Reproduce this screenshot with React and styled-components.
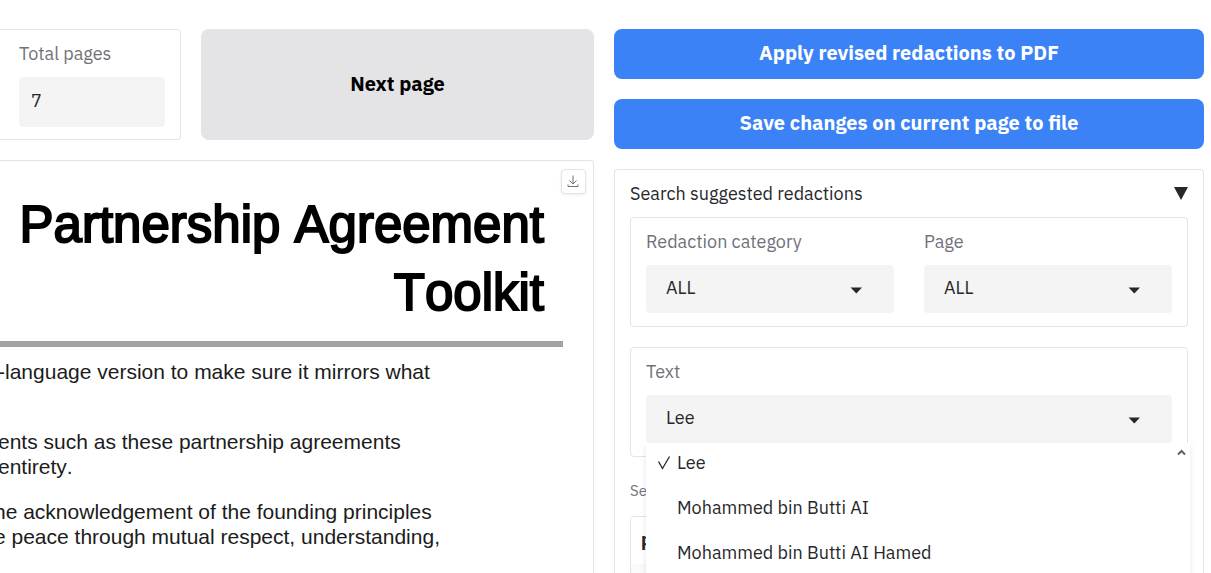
import React, { useState } from "react";
import styled, { createGlobalStyle } from "styled-components";

const GlobalStyle = createGlobalStyle`
  *, *::before, *::after { box-sizing: border-box; }
  body {
    margin: 0;
    background: #fff;
    color: #27272a;
    font-family: "IBM Plex Sans", Roboto, "Liberation Sans", sans-serif;
    font-size: 18px;
    font-weight: 400;
    line-height: 26px;
  }
  button, input, select { font: inherit; color: inherit; }
`;

const Page = styled.main`
  display: grid;
  grid-template-columns: minmax(0, 594fr) minmax(0, 590fr);
  gap: 20px;
  height: 100vh;
  padding: 29px 7px 0 0;
  overflow: hidden;
`;

const Column = styled.div`
  display: flex;
  flex-direction: column;
  gap: 20px;
  min-width: 0;
`;

const PagerRow = styled.div`
  display: flex;
  gap: 20px;
`;

const TotalPages = styled.div`
  flex: 0 0 181px;
  border: 1px solid #e4e4e7;
  border-left: 0;
  border-radius: 0 4px 4px 0;
  padding: 11px 15px 12px 19px;
`;

const Label = styled.label`
  display: block;
  margin-bottom: 10px;
  color: #71717a;
`;

const NumberInput = styled.input`
  display: block;
  width: 100%;
  height: 50px;
  padding: 0 12px 4px;
  border: 0;
  border-radius: 4px;
  background: #f4f4f4;
`;

const Button = styled.button`
  flex: ${(p) => (p.$primary ? "none" : "1")};
  min-height: 50px;
  padding: 0 16px 2px;
  border: 0;
  border-radius: 8px;
  background: ${(p) => (p.$primary ? "#3b82f6" : "#e4e4e7")};
  color: ${(p) => (p.$primary ? "#fff" : "#000")};
  font-size: 20px;
  font-weight: 700;
  cursor: pointer;
`;

const Preview = styled.section`
  position: relative;
  flex: 1;
  border: 1px solid #e4e4e7;
  border-width: 1px 1px 0 0;
  border-radius: 0 4px 0 0;
  padding-top: 30px;
  overflow: hidden;
  font-kerning: none;
`;

const DownloadButton = styled.button`
  position: absolute;
  top: 8px;
  right: 7px;
  display: grid;
  place-items: center;
  width: 25px;
  height: 25px;
  padding: 0;
  border: 1px solid #e4e4e7;
  border-radius: 4px;
  background: #fff;
  box-shadow: 0 1px 3px rgba(0, 0, 0, 0.08);
  color: #71717a;
`;

const DocTitle = styled.h1`
  margin: 0 49px 0 0;
  color: #000;
  font-family: "Liberation Sans", sans-serif;
  font-size: 51px;
  font-weight: 400;
  line-height: 68px;
  text-align: right;
  -webkit-text-stroke: 2px #000;
`;

const DocRule = styled.hr`
  height: 6px;
  margin: 14px 30px 12px 0;
  border: 0;
  background: #a3a3a3;
`;

const DocText = styled.p`
  margin: 0 0 ${(p) => (p.$loose ? "45px" : "20px")} -${(p) => p.$bleed}px;
  color: #1c1c1c;
  font-family: "Liberation Sans", sans-serif;
  font-size: 21px;
  font-weight: 400;
  line-height: 25px;
  white-space: nowrap;
`;

const Accordion = styled.section`
  flex: 1;
  border: 1px solid #e4e4e7;
  border-bottom: 0;
  border-radius: 4px 4px 0 0;
  padding: 11px 15px 0;
`;

const AccordionHeader = styled.button`
  display: flex;
  justify-content: space-between;
  align-items: center;
  width: 100%;
  margin-bottom: 10px;
  padding: 0;
  border: 0;
  background: none;
`;

const Group = styled.div`
  display: flex;
  gap: 30px;
  margin-bottom: 20px;
  padding: 11px 15px 13px;
  border: 1px solid #e4e4e7;
  border-radius: 4px;
`;

const Field = styled.div`
  position: relative;
  flex: 1;
  min-width: 0;
`;

const SelectWrap = styled.div`
  display: grid;
  grid-template-columns: 1fr 48px;
  align-items: center;
`;

const Select = styled.select`
  grid-area: 1 / 1 / 2 / 3;
  width: 100%;
  height: 48px;
  padding: 0 48px 2px 20px;
  border: 0;
  border-radius: 4px;
  background: #f4f4f4;
  appearance: none;
`;

const Caret = styled.svg`
  grid-area: 1 / 2 / 2 / 3;
  pointer-events: none;
`;

const Menu = styled.ul`
  position: absolute;
  z-index: 2;
  top: 100%;
  left: 0;
  right: -18px;
  height: 260px;
  margin: 0;
  padding: 0;
  background: #fff;
  box-shadow: 0 2px 6px rgba(0, 0, 0, 0.1);
  clip-path: inset(0 -12px -12px -12px);
  list-style: none;
`;

const MenuItem = styled.li`
  display: flex;
  align-items: center;
  height: 45px;
  padding: 0 10px 6px;
  cursor: pointer;
`;

const Tick = styled.span`
  display: flex;
  width: 21px;
  padding-left: 1px;
  visibility: ${(p) => (p.$on ? "visible" : "hidden")};
`;

const ScrollUp = styled.svg`
  position: absolute;
  top: 5px;
  right: 4px;
`;

const Caption = styled.p`
  margin: 21px 0 12px;
  color: #71717a;
  font-size: 15px;
  line-height: 26px;
`;

const TableFrame = styled.div`
  height: 120px;
  border: 1px solid #e4e4e7;
  border-radius: 4px 4px 0 0;
  background: #fafafa;
  overflow: hidden;
`;

const Table = styled.table`
  width: 100%;
  border-collapse: collapse;
  background: #fff;
  text-align: left;

  th { height: 47px; padding: 0 10px 2px; color: #27272a; font-weight: 700; }
`;

function DropDown({ id, label, options, children, ...rest }) {
  return (
    <Field>
      <Label htmlFor={id}>{label}</Label>
      <SelectWrap>
        <Select id={id} {...rest}>
          {options.map((o) => (
            <option key={o}>{o}</option>
          ))}
        </Select>
        <Caret width="20" height="20" viewBox="0 0 20 20" fill="#27272a" aria-hidden="true">
          <path d="M4.6 8.4h11.4l-5.7 6z" />
        </Caret>
      </SelectWrap>
      {children}
    </Field>
  );
}

const NAMES = ["Lee", "Mohammed bin Butti AI", "Mohammed bin Butti AI Hamed"];

export default function App() {
  const [name, setName] = useState(NAMES[0]);

  return (
    <>
      <GlobalStyle />
      <Page>
        <Column>
          <PagerRow>
            <TotalPages>
              <Label htmlFor="total">Total pages</Label>
              <NumberInput id="total" defaultValue="7" />
            </TotalPages>
            <Button type="button">Next page</Button>
          </PagerRow>
          <Preview>
            <DownloadButton type="button" aria-label="Download">
              <svg width="13" height="13" viewBox="0 0 13 13" fill="none" stroke="currentColor" aria-hidden="true">
                <path d="M6 0.500v8M2.500 5.500l3.500 3.500L9.500 5.500M1 9.500v2h10v-2" />
              </svg>
            </DownloadButton>
            <DocTitle>
              Partnership Agreement
              <br />
              Toolkit
            </DocTitle>
            <DocRule />
            <DocText $bleed={2} $loose>-language version to make sure it mirrors what</DocText>
            <DocText $bleed={2}>
              ents such as these partnership agreements
              <br />
              entirety.
            </DocText>
            <DocText $bleed={6}>
              he acknowledgement of the founding principles
              <br />e peace through mutual respect, understanding,
            </DocText>
          </Preview>
        </Column>

        <Column>
          <Button type="button" $primary>Apply revised redactions to PDF</Button>
          <Button type="button" $primary>Save changes on current page to file</Button>
          <Accordion>
            <AccordionHeader type="button" aria-expanded="true">
              <span>Search suggested redactions</span>
              <svg width="14" height="14" viewBox="0 0 14 14" fill="#27272a" aria-hidden="true">
                <path d="M0 0h14L7 13z" />
              </svg>
            </AccordionHeader>
            <Group>
              <DropDown id="category" label="Redaction category" options={["ALL"]} />
              <DropDown id="page" label="Page" options={["ALL"]} />
            </Group>
            <Group>
              <DropDown
                id="text"
                label="Text"
                options={NAMES}
                value={name}
                onChange={(e) => setName(e.target.value)}
              >
                <Menu role="listbox" aria-label="Text">
                  {NAMES.map((n) => (
                    <MenuItem key={n} role="option" aria-selected={n === name} onClick={() => setName(n)}>
                      <Tick $on={n === name}>
                        <svg width="14" height="15" viewBox="0 0 14 15" fill="none" stroke="#27272a" strokeWidth="1.3" aria-hidden="true">
                          <path d="M1.500 6.500l4 7L12.500 1.500" />
                        </svg>
                      </Tick>
                      {n}
                    </MenuItem>
                  ))}
                  <ScrollUp width="9" height="8" viewBox="0 0 9 8" fill="none" stroke="#606060" strokeWidth="2" aria-hidden="true">
                    <path d="M1 6.500l3.500-3.500L8 6.500" />
                  </ScrollUp>
                </Menu>
              </DropDown>
            </Group>
            <Caption>Search</Caption>
            <TableFrame>
              <Table>
                <thead>
                  <tr>
                    <th scope="col">page</th>
                  </tr>
                </thead>
              </Table>
            </TableFrame>
          </Accordion>
        </Column>
      </Page>
    </>
  );
}
